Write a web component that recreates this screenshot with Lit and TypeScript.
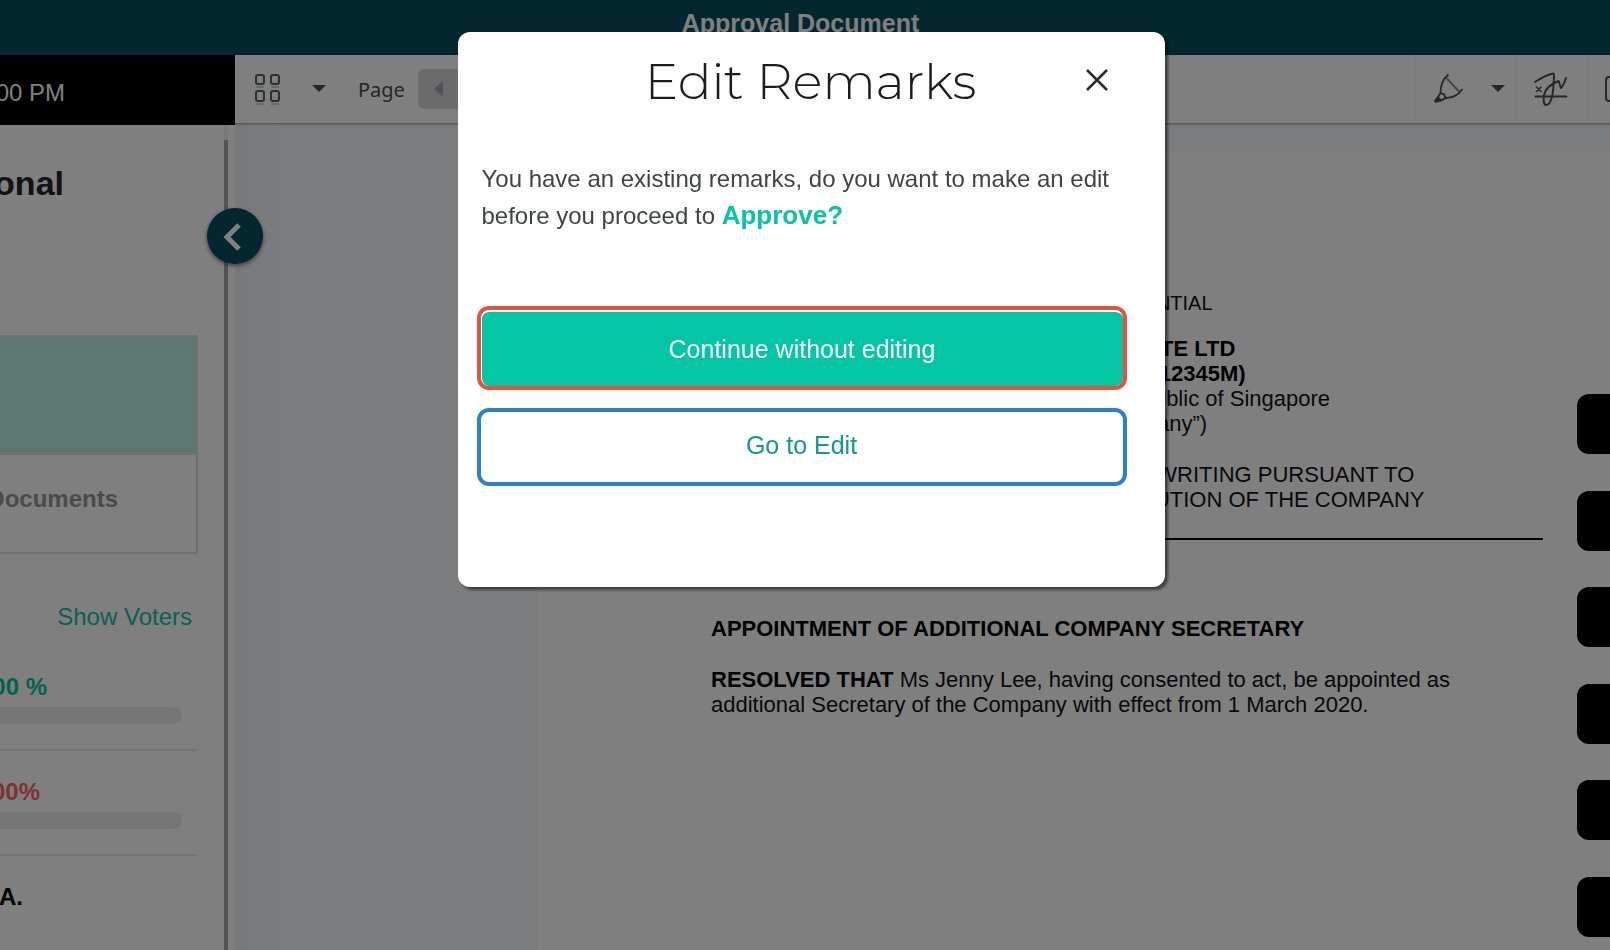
import { LitElement, html, css } from "lit";
import { customElement, property } from "lit/decorators.js";

@customElement("top-bar")
class TopBar extends LitElement {
  static styles = css`
    :host {
      display: flex;
      justify-content: center;
      height: 55px;
      box-sizing: border-box;
      padding: 8px 9px 0 0;
      background: #084c5c;
      color: #fff;
      font: 700 25px/30px "Liberation Sans", Arial, sans-serif;
    }
    .title {
      margin: 0;
      font: inherit;
    }
  `;
  render() {
    return html`<h1 class="title">Approval Document</h1>`;
  }
}

@customElement("vote-row")
class VoteRow extends LitElement {
  @property() value = "";
  @property({ reflect: true }) tone = "yes";
  static styles = css`
    :host {
      display: block;
      border-bottom: 2px solid #ebebeb;
      padding-bottom: 25px;
    }
    .value {
      display: flex;
      justify-content: flex-end;
      white-space: nowrap;
      margin-bottom: 5px;
      padding-right: 151px;
      font-weight: 700;
      color: #04c5a4;
    }
    :host([tone="no"]) .value {
      padding-right: 158px;
      color: #ff6166;
    }
    .track {
      height: 17px;
      margin-right: 16px;
      border-radius: 0 9px 9px 0;
      background: #e9ecef;
    }
  `;
  render() {
    return html`<div class="value">${this.value}</div>
      <div class="track"></div>`;
  }
}

@customElement("side-panel")
class SidePanel extends LitElement {
  static styles = css`
    :host {
      display: flex;
      flex-direction: column;
      position: relative;
      flex: none;
      width: 235px;
      font: 24px/30px "Liberation Sans", Arial, sans-serif;
    }
    .time {
      flex: none;
      height: 70px;
      box-sizing: border-box;
      padding: 23px 170px 0 0;
      display: flex;
      justify-content: flex-end;
      white-space: nowrap;
      background: #000;
      color: #fff;
    }
    .scroll {
      flex: 1;
      display: flex;
      min-height: 0;
      background: #fff;
    }
    .content {
      flex: 1;
      min-width: 0;
      padding: 38px 26px 0 0;
    }
    .title,
    .docs,
    .link,
    .name {
      display: flex;
      justify-content: flex-end;
      white-space: nowrap;
    }
    .rail {
      flex: none;
      width: 4px;
      margin-right: 7px;
      padding-top: 15px;
      box-sizing: border-box;
      background: #f4f4f4;
      display: flex;
    }
    .thumb {
      flex: 1;
      background: #a8a8a8;
    }
    .title {
      margin: 0 0 132px;
      padding-right: 134px;
      font-size: 34px;
      line-height: 40px;
      color: #222628;
    }
    .box {
      border: 2px solid #e2e2e2;
      border-left: 0;
      margin-bottom: 48px;
    }
    .current {
      height: 116px;
      background: #b9eee0;
      border-bottom: 2px solid #e2e2e2;
    }
    .docs {
      padding: 29px 78px 38px 0;
      font-weight: 700;
      color: #969696;
    }
    .link {
      margin-bottom: 40px;
      padding-right: 6px;
      color: #12c2aa;
      text-decoration: none;
    }
    .gap {
      height: 26px;
    }
    .name {
      padding-right: 175px;
      font-weight: 700;
      color: #000;
    }
    .toggle {
      position: absolute;
      top: 153px;
      right: -28px;
      z-index: 1;
      width: 56px;
      height: 56px;
      padding: 0;
      border: 0;
      border-radius: 50%;
      background: #084c5c;
      box-shadow: 0 2px 4px rgba(0, 0, 0, 0.5);
    }
    .chevron {
      display: block;
    }
  `;
  render() {
    return html`
      <div class="time">00 PM</div>
      <div class="scroll">
        <div class="content">
          <h2 class="title">onal</h2>
          <div class="box">
            <div class="current"></div>
            <div class="docs">Documents</div>
          </div>
          <a class="link" href="#voters">Show Voters</a>
          <vote-row value="00 %"></vote-row>
          <div class="gap"></div>
          <vote-row value="00%" tone="no"></vote-row>
          <div class="gap"></div>
          <div class="name">A.</div>
        </div>
        <div class="rail"><div class="thumb"></div></div>
      </div>
      <button class="toggle" aria-label="Collapse panel">
        <svg class="chevron" width="56" height="56" viewBox="0 0 56 56">
          <path d="M32 17 20 29 32 41" fill="none" stroke="#fff" stroke-width="5" />
        </svg>
      </button>
    `;
  }
}

@customElement("viewer-toolbar")
class ViewerToolbar extends LitElement {
  static styles = css`
    :host {
      position: relative;
      display: flex;
      align-items: stretch;
      justify-content: space-between;
      flex: none;
      height: 68px;
      overflow: hidden;
      background: #fff;
      border-bottom: 1px solid #b4b6b8;
      box-shadow: 0 1px 2px rgba(0, 0, 0, 0.2);
      font: 20px/28px "Noto Sans", "Open Sans", sans-serif;
      color: #485056;
    }
    .group {
      display: flex;
      align-items: center;
    }
    .left {
      padding-left: 19px;
    }
    .icon {
      display: block;
      padding: 0;
      border: 0;
      background: none;
    }
    .caret {
      margin-left: 30px;
    }
    .label {
      margin: 0 13px 0 32px;
      padding-top: 1px;
    }
    .prev {
      display: flex;
      align-items: center;
      width: 60px;
      height: 40px;
      padding: 0 0 0 16px;
      border: 0;
      border-radius: 6px;
      background: #d7d7da;
    }
    .cell {
      display: flex;
      align-items: center;
      align-self: stretch;
      box-sizing: border-box;
      border-left: 1px solid #f0f2f8;
    }
    .pen {
      width: 101px;
      padding-left: 17px;
    }
    .sign {
      width: 72px;
      padding-left: 16px;
    }
    .more {
      width: 22px;
      padding-left: 15px;
      overflow: hidden;
    }
    .near {
      margin-left: 26px;
    }
    svg {
      display: block;
      flex: none;
    }
  `;
  caret() {
    return html`<svg width="14" height="8" viewBox="0 0 14 8">
      <path d="M0 0h14L7 7z" fill="#485056" />
    </svg>`;
  }
  render() {
    return html`
      <div class="group left">
        <button class="icon" aria-label="Thumbnails">
          <svg width="28" height="34" viewBox="0 0 28 34" fill="none" stroke="#5a6068" stroke-width="2">
            <rect x="2" y="3" width="8" height="9" rx="2" />
            <rect x="17" y="3" width="8" height="9" rx="2" />
            <rect x="2" y="19" width="8" height="10" rx="2" />
            <rect x="17" y="19" width="8" height="10" rx="2" />
            <path d="M2 15h8M17 15h8M2 32h8M17 32h8" stroke="#c4c6c8" stroke-width="1.5" />
          </svg>
        </button>
        <button class="icon caret" aria-label="Layout menu">${this.caret()}</button>
        <span class="label">Page</span>
        <button class="prev" aria-label="Previous page">
          <svg width="9" height="16" viewBox="0 0 9 16"><path d="M9 0v16L0 8z" fill="#a6a6aa" /></svg>
        </button>
      </div>
      <div class="group">
        <div class="cell pen">
          <button class="icon" aria-label="Highlighter">
            <svg width="32" height="32" viewBox="0 0 32 32" fill="none" stroke="#485056" stroke-width="1.8" stroke-linecap="round">
              <path d="M15 2C10 6 7.500 13 7.500 20" />
              <path d="M29 16.500C26 21 20 25 12.500 25" />
              <path d="M14 5.500 25.500 18" stroke="#8c9094" stroke-width="2" />
              <path d="M7.500 20 5 24 8 27.500 12.500 25 11 21.500z" />
              <path d="M4.500 24.500 2 28 3 29 7.500 27.500z" fill="#485056" />
            </svg>
          </button>
          <button class="icon near" aria-label="Highlighter menu">${this.caret()}</button>
        </div>
        <div class="cell sign">
          <button class="icon" aria-label="Signature">
            <svg width="36" height="36" viewBox="0 0 36 36" fill="none" stroke="#485056" stroke-width="2" stroke-linecap="round" stroke-linejoin="round">
              <path d="M2 11C8 7 14 4 20 2.500c1.500 0 1 3 .8 7C20.500 18 19 33 13.500 34c-4 0-3.500-9-1-14C15 15.500 21 12 25.500 10c1 1 1.300 5 2.500 7 2-2 4-7 5-10" />
              <path d="M3.500 16 8 20.500M8 16 3.500 20.500" stroke-width="1.600" />
              <path d="M2.500 25.500h31" stroke-width="1.800" />
            </svg>
          </button>
        </div>
        <div class="cell more">
          <svg width="30" height="26" viewBox="0 0 30 26" fill="none" stroke="#485056" stroke-width="2">
            <rect x="2" y="1" width="26" height="24" rx="3" />
          </svg>
        </div>
      </div>
    `;
  }
}

@customElement("document-page")
class DocumentPage extends LitElement {
  static styles = css`
    :host {
      display: flex;
      flex: 1;
      margin: 29px 0 0 303px;
      padding-left: 173px;
      gap: 34px;
      background: #fff;
      color: #101214;
      font: 22px/25px "Liberation Sans", Arial, sans-serif;
    }
    .text {
      flex: 1;
      padding-top: 138px;
    }
    .center {
      text-align: center;
      white-space: nowrap;
    }
    .center,
    .heading {
      margin: 0 0 26px;
    }
    .mark {
      margin-bottom: 20px;
      font-size: 20px;
    }
    .strong,
    .heading {
      font-weight: 700;
      font-size: inherit;
      color: #000;
    }
    .rule {
      margin: 0 0 76px;
      border: 0;
      border-top: 2px solid #000;
    }
    .body {
      margin: 0;
    }
    .tools {
      width: 33px;
      display: flex;
      flex-direction: column;
      justify-content: space-between;
      padding: 241px 0 13px;
    }
    .tool {
      height: 60px;
      padding: 0;
      border: 0;
      border-radius: 12px 0 0 12px;
      background: #000;
    }
  `;
  render() {
    return html`
      <div class="text">
        <p class="center mark">B. CONFIDENTIAL</p>
        <p class="center">
          <span class="strong">NEW CORP PTE LTD<br />(UEN No. 202012345M)</span><br />
          Incorporated in the Republic of Singapore<br />
          (the “Company”)
        </p>
        <p class="center">
          DIRECTORS’ RESOLUTION IN WRITING PURSUANT TO<br />
          ARTICLE 100 OF THE CONSTITUTION OF THE COMPANY
        </p>
        <hr class="rule" />
        <h3 class="heading">APPOINTMENT OF ADDITIONAL COMPANY SECRETARY</h3>
        <p class="body">
          <b class="strong">RESOLVED THAT</b> Ms Jenny Lee, having consented to act, be appointed as
          additional Secretary of the Company with effect from 1 March 2020.
        </p>
      </div>
      <div class="tools">
        ${[1, 2, 3, 4, 5, 6].map((n) => html`<button class="tool" aria-label="Action ${n}"></button>`)}
      </div>
    `;
  }
}

@customElement("remarks-dialog")
class RemarksDialog extends LitElement {
  static styles = css`
    :host {
      position: fixed;
      inset: 0;
      z-index: 2;
      display: flex;
      justify-content: center;
      align-items: flex-start;
      padding: 32px 0 0 12px;
      background: rgba(0, 0, 0, 0.5);
      font: 24px/37px "Liberation Sans", Arial, sans-serif;
      color: #414446;
    }
    .dialog {
      box-sizing: border-box;
      width: 707px;
      max-width: 100%;
      padding: 18px 38px 101px 19px;
      border-radius: 12px;
      background: #fff;
      box-shadow: 3px 3px 3px rgba(0, 0, 0, 0.5);
    }
    .head {
      display: grid;
      grid-template-columns: 1fr auto 1fr;
      align-items: center;
      margin-bottom: 46px;
      padding-left: 18px;
    }
    .title {
      grid-column: 2;
      margin: 0;
      font: 300 50px/64px Montserrat, Inter, sans-serif;
      color: #1a1c1e;
    }
    .close {
      justify-self: end;
      margin: 0 18px 4px 0;
      padding: 0;
      border: 0;
      background: none;
    }
    .cross {
      display: block;
    }
    .message {
      margin: 0 -10px 72px 5px;
    }
    .approve {
      font-size: 26px;
      color: #04c5a4;
    }
    .choice {
      display: block;
      box-sizing: border-box;
      width: 100%;
      border-radius: 12px;
      font: 25px/30px "Liberation Sans", Arial, sans-serif;
      text-align: center;
    }
    .go {
      height: 84px;
      margin-bottom: 18px;
      padding: 2px 0 0 1px;
      border: 4px solid #e8513a;
      background: #04c5a4 content-box;
      color: #fff;
    }
    .edit {
      height: 78px;
      padding: 0 0 4px;
      border: 4px solid #2a82cc;
      background: #fff;
      color: #109a94;
    }
  `;
  render() {
    return html`
      <section class="dialog" role="dialog" aria-modal="true" aria-labelledby="title">
        <header class="head">
          <h2 class="title" id="title">Edit Remarks</h2>
          <button class="close" aria-label="Close">
            <svg class="cross" width="24" height="24" viewBox="0 0 24 24">
              <path d="M2 2 22 22M22 2 2 22" stroke="#2a2c2e" stroke-width="2.500" />
            </svg>
          </button>
        </header>
        <p class="message">
          You have an existing remarks, do you want to make an edit before you proceed to
          <b class="approve">Approve?</b>
        </p>
        <button class="choice go">Continue without editing</button>
        <button class="choice edit">Go to Edit</button>
      </section>
    `;
  }
}

@customElement("app-root")
class AppRoot extends LitElement {
  static styles = css`
    :host {
      display: flex;
      flex-direction: column;
      height: 100vh;
      overflow: hidden;
    }
    .main {
      flex: 1;
      display: flex;
      min-height: 0;
    }
    .viewer {
      flex: 1;
      display: flex;
      flex-direction: column;
      min-width: 0;
      background: linear-gradient(90deg, #f0f2f5, #f6f8fb 50px);
    }
  `;
  render() {
    return html`
      <top-bar></top-bar>
      <main class="main">
        <side-panel></side-panel>
        <div class="viewer">
          <viewer-toolbar></viewer-toolbar>
          <document-page></document-page>
        </div>
      </main>
      <remarks-dialog></remarks-dialog>
    `;
  }
}
